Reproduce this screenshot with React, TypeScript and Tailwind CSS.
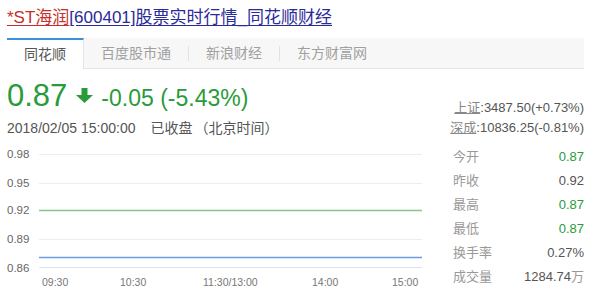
import React from 'react';

const tabs = ['同花顺', '百度股市通', '新浪财经', '东方财富网'];

const stats: { label: string; value: string; unit?: string; up?: boolean }[] = [
  { label: '今开', value: '0.87', up: true },
  { label: '昨收', value: '0.92' },
  { label: '最高', value: '0.87', up: true },
  { label: '最低', value: '0.87', up: true },
  { label: '换手率', value: '0.27%' },
  { label: '成交量', value: '1284.74', unit: '万' },
  { label: '市盈率', value: '--' },
];

const yTicks = [
  { label: '0.98', y: 16 },
  { label: '0.95', y: 45 },
  { label: '0.92', y: 72 },
  { label: '0.89', y: 101 },
  { label: '0.86', y: 130 },
];

const xTicks = [
  { label: '09:30', x: 42 },
  { label: '10:30', x: 120 },
  { label: '11:30/13:00', x: 203 },
  { label: '14:00', x: 312 },
  { label: '15:00', x: 392 },
];

function DownArrow() {
  return (
    <svg width="17" height="15" viewBox="0 0 17 15" className="mb-[3px]">
      <path d="M5.5 0h6v7h5.5L8.5 15 0 7h5.5z" fill="#2a9b3a" />
    </svg>
  );
}

function Chart() {
  return (
    <svg width="430" height="156" className="block font-['Liberation_Sans',sans-serif]">
      <line x1="39" x2="422" y1="16.5" y2="16.5" stroke="#eeeeee" />
      <line x1="39" x2="422" y1="45.5" y2="45.5" stroke="#eeeeee" />
      <line x1="39" x2="422" y1="101.5" y2="101.5" stroke="#eeeeee" />
      <line x1="39" x2="422" y1="72.5" y2="72.5" stroke="#86c586" strokeWidth="1.5" />
      <line x1="39" x2="422" y1="119.5" y2="119.5" stroke="#6a9fdb" strokeWidth="1.5" />
      <line x1="39" x2="422" y1="129.5" y2="129.5" stroke="#d8e6f4" />
      {yTicks.map(t => (
        <text key={t.label} x="7" y={t.y + 4} fontSize="11.5" fill="#666">
          {t.label}
        </text>
      ))}
      {xTicks.map(t => (
        <text key={t.label} x={t.x} y="148" fontSize="10.5" fill="#777">
          {t.label}
        </text>
      ))}
    </svg>
  );
}

export default function App() {
  return (
    <div className="w-[600px] h-[294px] overflow-hidden bg-white pl-[7px] pr-[16px] font-['Liberation_Sans','Noto_Sans_CJK_SC',sans-serif]">
      {/* Title */}
      <div className="pt-[6px] h-[38px] text-[17px] leading-[24px] whitespace-nowrap">
        <span className="text-[#c4302b] underline underline-offset-2">*ST海润</span>
        <span className="text-[#2a2a99] underline underline-offset-2">[600401]股票实时行情_同花顺财经</span>
      </div>

      {/* Tabs */}
      <div className="flex items-stretch h-[31px] bg-[#f7f7f7] border-b border-[#e4e4e4]">
        {tabs.map((t, i) => (
          <React.Fragment key={t}>
            {i > 1 && <div className="self-center w-px h-[15px] bg-[#e2e2e2]" />}
            <div
              className={
                i === 0
                  ? 'px-[17px] flex items-center bg-white border-t-2 border-[#3d8fdc] border-r border-r-[#e4e4e4] -mb-px text-[14px] text-[#555]'
                  : 'px-[17px] flex items-center text-[14px] text-[#a0a0a0]'
              }
            >
              {t}
            </div>
          </React.Fragment>
        ))}
      </div>

      {/* Price header */}
      <div className="flex items-end justify-between">
        <div>
          <div className="flex items-baseline mt-[10px] h-[34px] text-[#2a9b3a]">
            <span className="text-[31px] leading-[34px]">0.87</span>
            <span className="ml-[9px]">
              <DownArrow />
            </span>
            <span className="ml-[8px] text-[23px] leading-[34px]">-0.05 (-5.43%)</span>
          </div>
          <div className="mt-[5px] text-[14px] leading-[20px] text-[#555] whitespace-nowrap">
            <span>2018/02/05 15:00:00</span>
            <span className="ml-[15px]">已收盘</span>
            <span className="ml-[2px]">（北京时间）</span>
          </div>
        </div>
        <div className="text-right text-[13px] leading-[20px] text-[#555]">
          <div>
            <span className="underline text-[#888]">上证</span>:3487.50(+0.73%)
          </div>
          <div>
            <span className="underline text-[#888]">深成</span>:10836.25(-0.81%)
          </div>
        </div>
      </div>

      {/* Chart + stats */}
      <div className="flex -ml-[7px]">
        <Chart />
        <div className="flex-1 pl-[23px] pt-[7px]">
          {stats.map(s => (
            <div key={s.label} className="flex justify-between h-[24px] items-center text-[13px]">
              <span className="text-[#999]">{s.label}</span>
              <span className={s.up ? 'text-[#2a9b3a]' : 'text-[#555]'}>
                {s.value}
                {s.unit && <span className="text-[#999]">{s.unit}</span>}
              </span>
            </div>
          ))}
        </div>
      </div>
    </div>
  );
}
